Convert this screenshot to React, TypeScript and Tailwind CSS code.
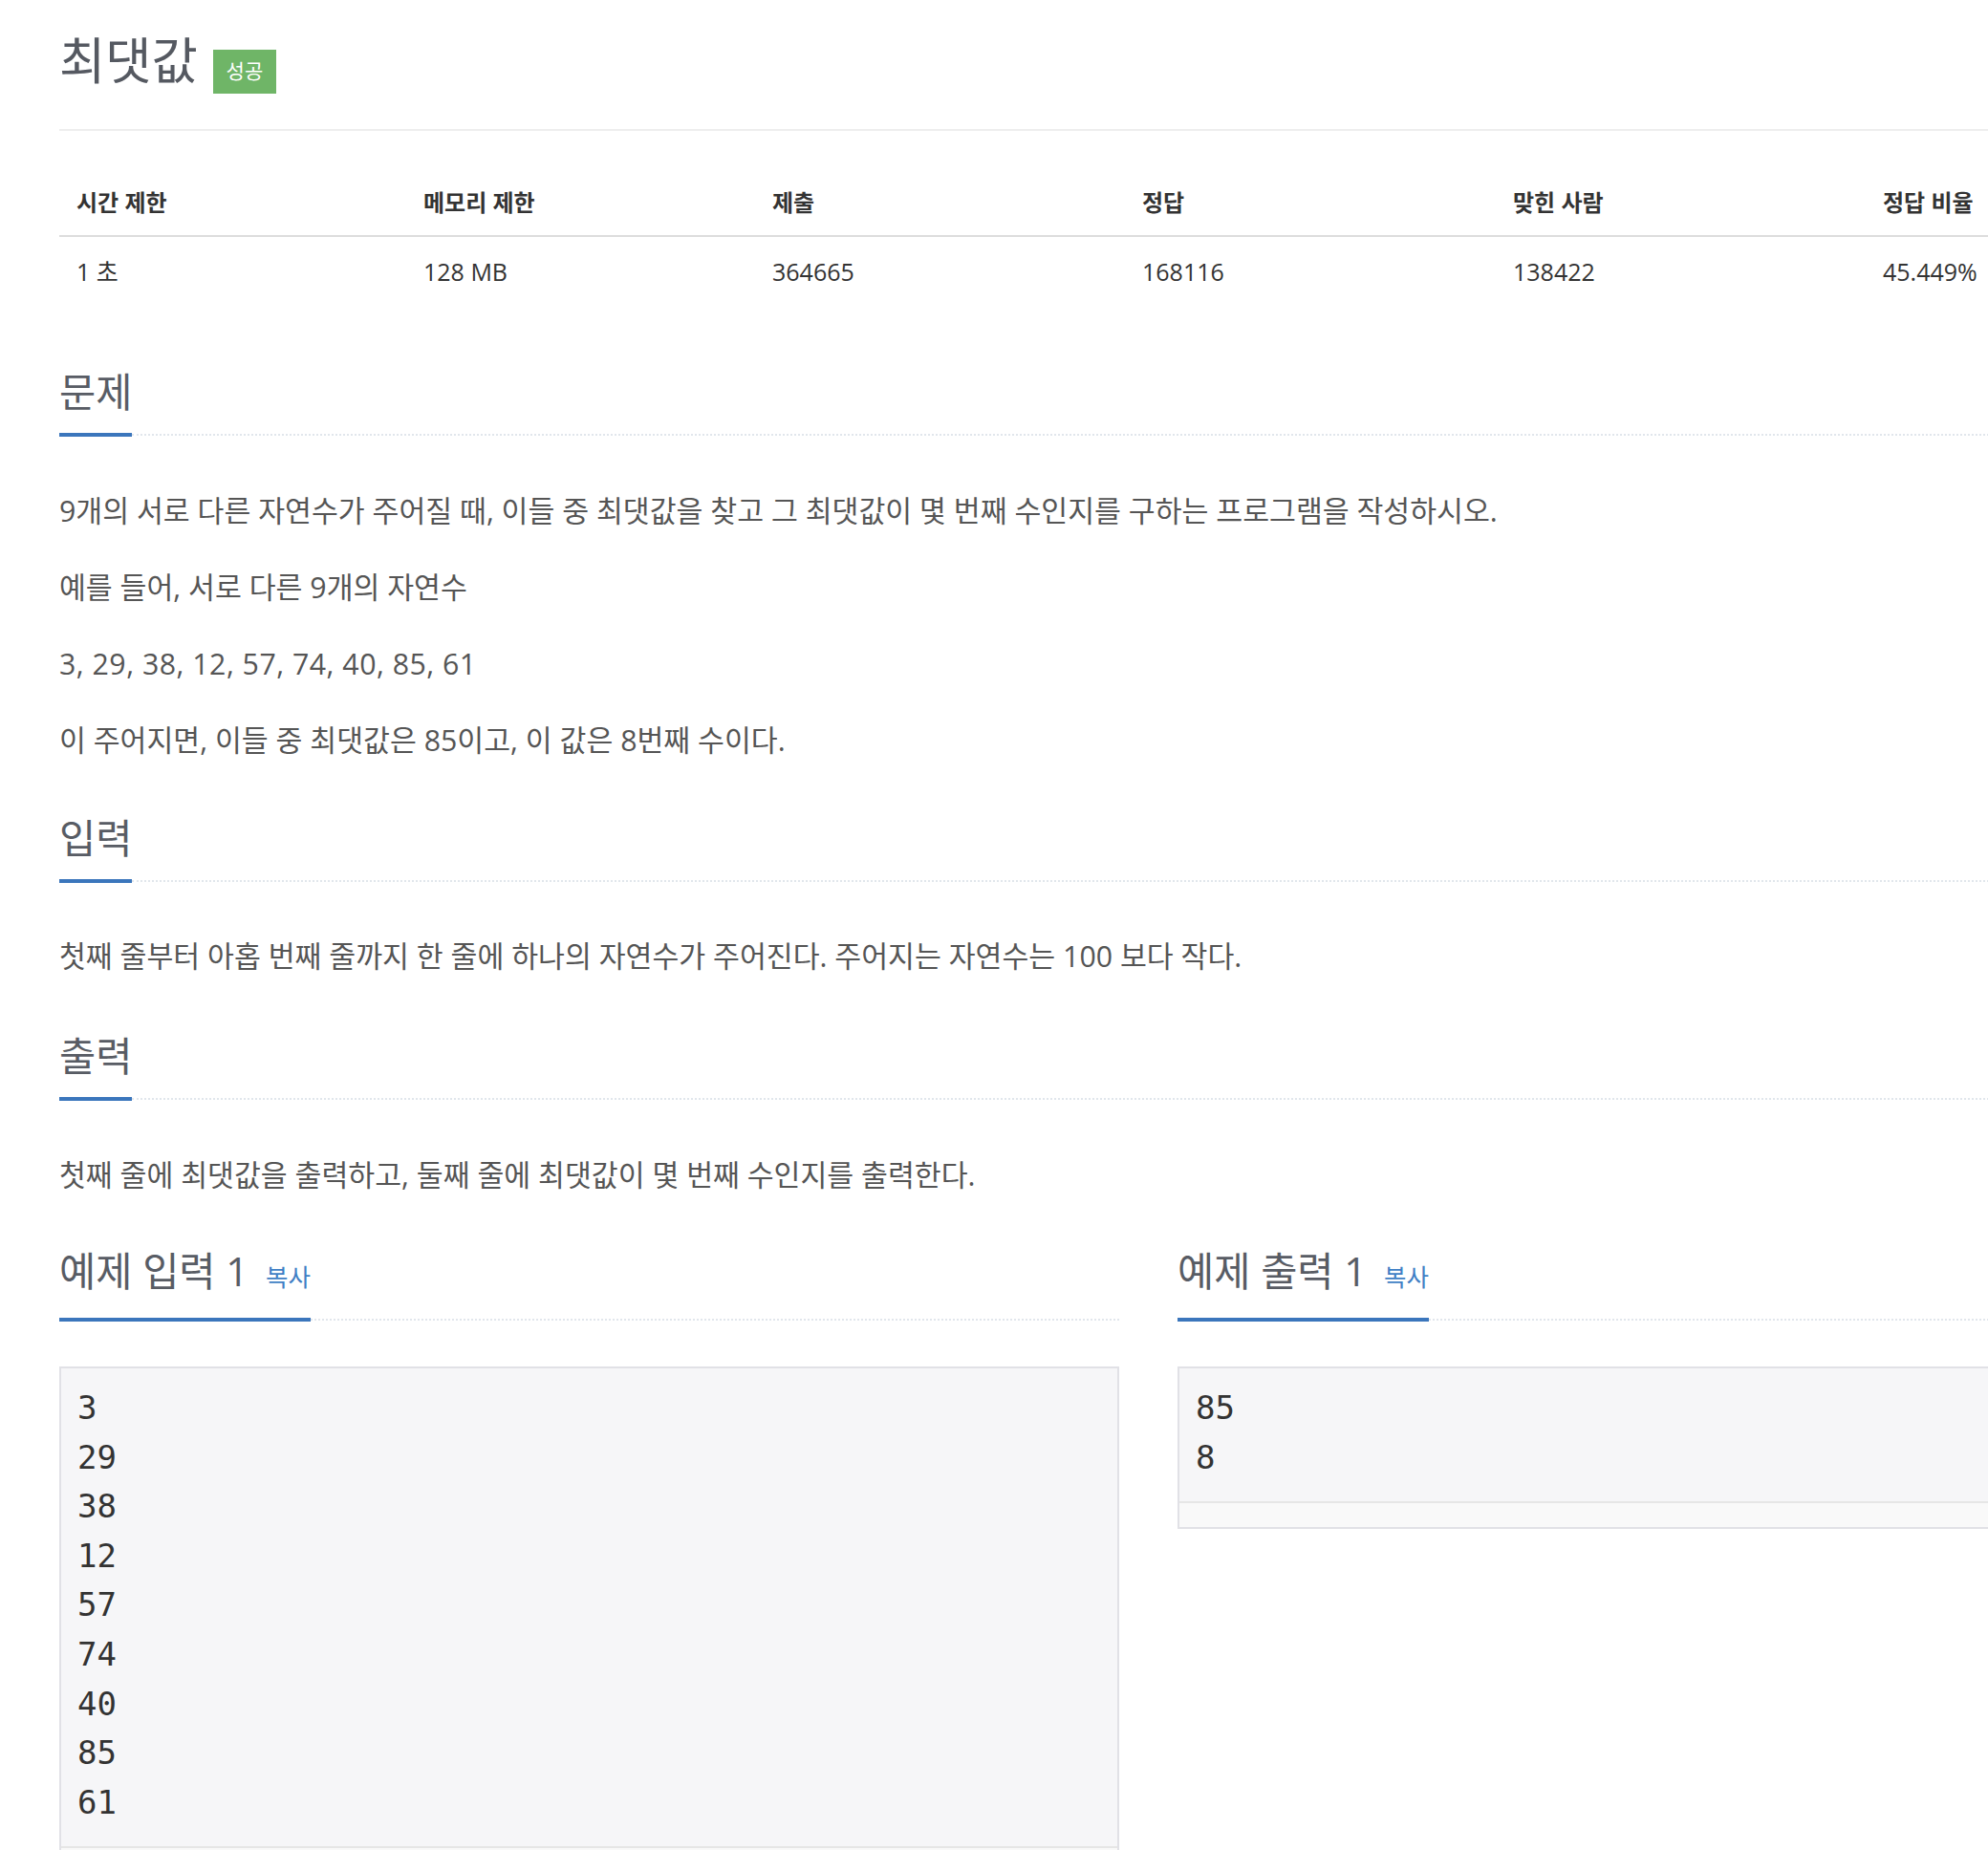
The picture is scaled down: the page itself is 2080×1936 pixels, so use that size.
const headers = ['시간 제한', '메모리 제한', '제출', '정답', '맞힌 사람', '정답 비율'];
const values = ['1 초', '128 MB', '364665', '168116', '138422', '45.449%'];

const Headline = ({ children }: { children: React.ReactNode }) => (
  <div className="flex items-end">
    <h2 className="flex items-baseline whitespace-nowrap border-b-4 border-[#3b76bc] pb-[15px] text-[41.5px] font-normal leading-[56px] text-[#585c64]">
      {children}
    </h2>
    <div className="mb-[1px] flex-1 border-b-2 border-dotted border-[#e1e6ec]" />
  </div>
);

const Sample = ({ title, lines }: { title: string; lines: string[] }) => (
  <div>
    <Headline>
      {title}
      <span className="ml-[18px] text-[25.5px] text-[#3f7fc5]">복사</span>
    </Headline>
    <div className="mt-[47px] border-2 border-[#e1e1e6] bg-[#f6f6f8]">
      <pre className="px-[17px] pt-[16px] pb-[20px] font-['DejaVu_Sans_Mono',monospace] text-[34px] leading-[51.6px] text-[#333]">
        {lines.join('\n')}
      </pre>
      <div className="h-[27px] border-t-2 border-[#e6e6e6] bg-[#f9f9f9]" />
    </div>
  </div>
);

const App = () => {
  return (
    <div className="h-[1936px] w-[2080px] overflow-hidden bg-white font-['Open_Sans','Noto_Sans_CJK_KR',sans-serif]">
      <div className="ml-[62px] w-[2279px]">
        {/* 제목 */}
        <div className="flex items-end border-b-2 border-[#eeeeee] pt-[28px] pb-[37px]">
          <h1 className="text-[52.5px] font-normal leading-[70px] text-[#555961]">최댓값</h1>
          <span className="ml-[16px] flex h-[46px] w-[66px] items-center justify-center bg-[#6fb567] text-[21px] text-white">
            성공
          </span>
        </div>

        {/* 제한 표 */}
        <div className="grid h-[111px] grid-cols-[363px_365px_387px_388px_387px_1fr] items-end border-b-2 border-[#dddddd] pb-[19px]">
          {headers.map((h) => (
            <div key={h} className="whitespace-nowrap px-[18px] text-[24px] font-bold leading-[30px] text-[#333]">
              {h}
            </div>
          ))}
        </div>
        <div className="grid grid-cols-[363px_365px_387px_388px_387px_1fr] pt-[21px]">
          {values.map((v) => (
            <div key={v} className="whitespace-nowrap px-[18px] text-[25px] leading-[30px] text-[#333]">
              {v}
            </div>
          ))}
        </div>

        <section className="mt-[83px]">
          <Headline>문제</Headline>
          <div className="mt-[54px] space-y-[32px] text-[30.3px] leading-[48px] text-[#555]">
            <p>9개의 서로 다른 자연수가 주어질 때, 이들 중 최댓값을 찾고 그 최댓값이 몇 번째 수인지를 구하는 프로그램을 작성하시오.</p>
            <p>예를 들어, 서로 다른 9개의 자연수</p>
            <p className="tracking-[0.5px]">3, 29, 38, 12, 57, 74, 40, 85, 61</p>
            <p>이 주어지면, 이들 중 최댓값은 85이고, 이 값은 8번째 수이다.</p>
          </div>
        </section>

        <section className="mt-[50px]">
          <Headline>입력</Headline>
          <p className="mt-[53px] text-[30.3px] leading-[48px] text-[#555]">
            첫째 줄부터 아홉 번째 줄까지 한 줄에 하나의 자연수가 주어진다. 주어지는 자연수는 100 보다 작다.
          </p>
        </section>

        <section className="mt-[52px]">
          <Headline>출력</Headline>
          <p className="mt-[54px] text-[30.3px] leading-[48px] text-[#555]">
            첫째 줄에 최댓값을 출력하고, 둘째 줄에 최댓값이 몇 번째 수인지를 출력한다.
          </p>
        </section>

        <div className="mt-[48px] grid grid-cols-2 gap-[61px]">
          <Sample title="예제 입력 1" lines={['3', '29', '38', '12', '57', '74', '40', '85', '61']} />
          <Sample title="예제 출력 1" lines={['85', '8']} />
        </div>
      </div>
    </div>
  );
};

export default App;
